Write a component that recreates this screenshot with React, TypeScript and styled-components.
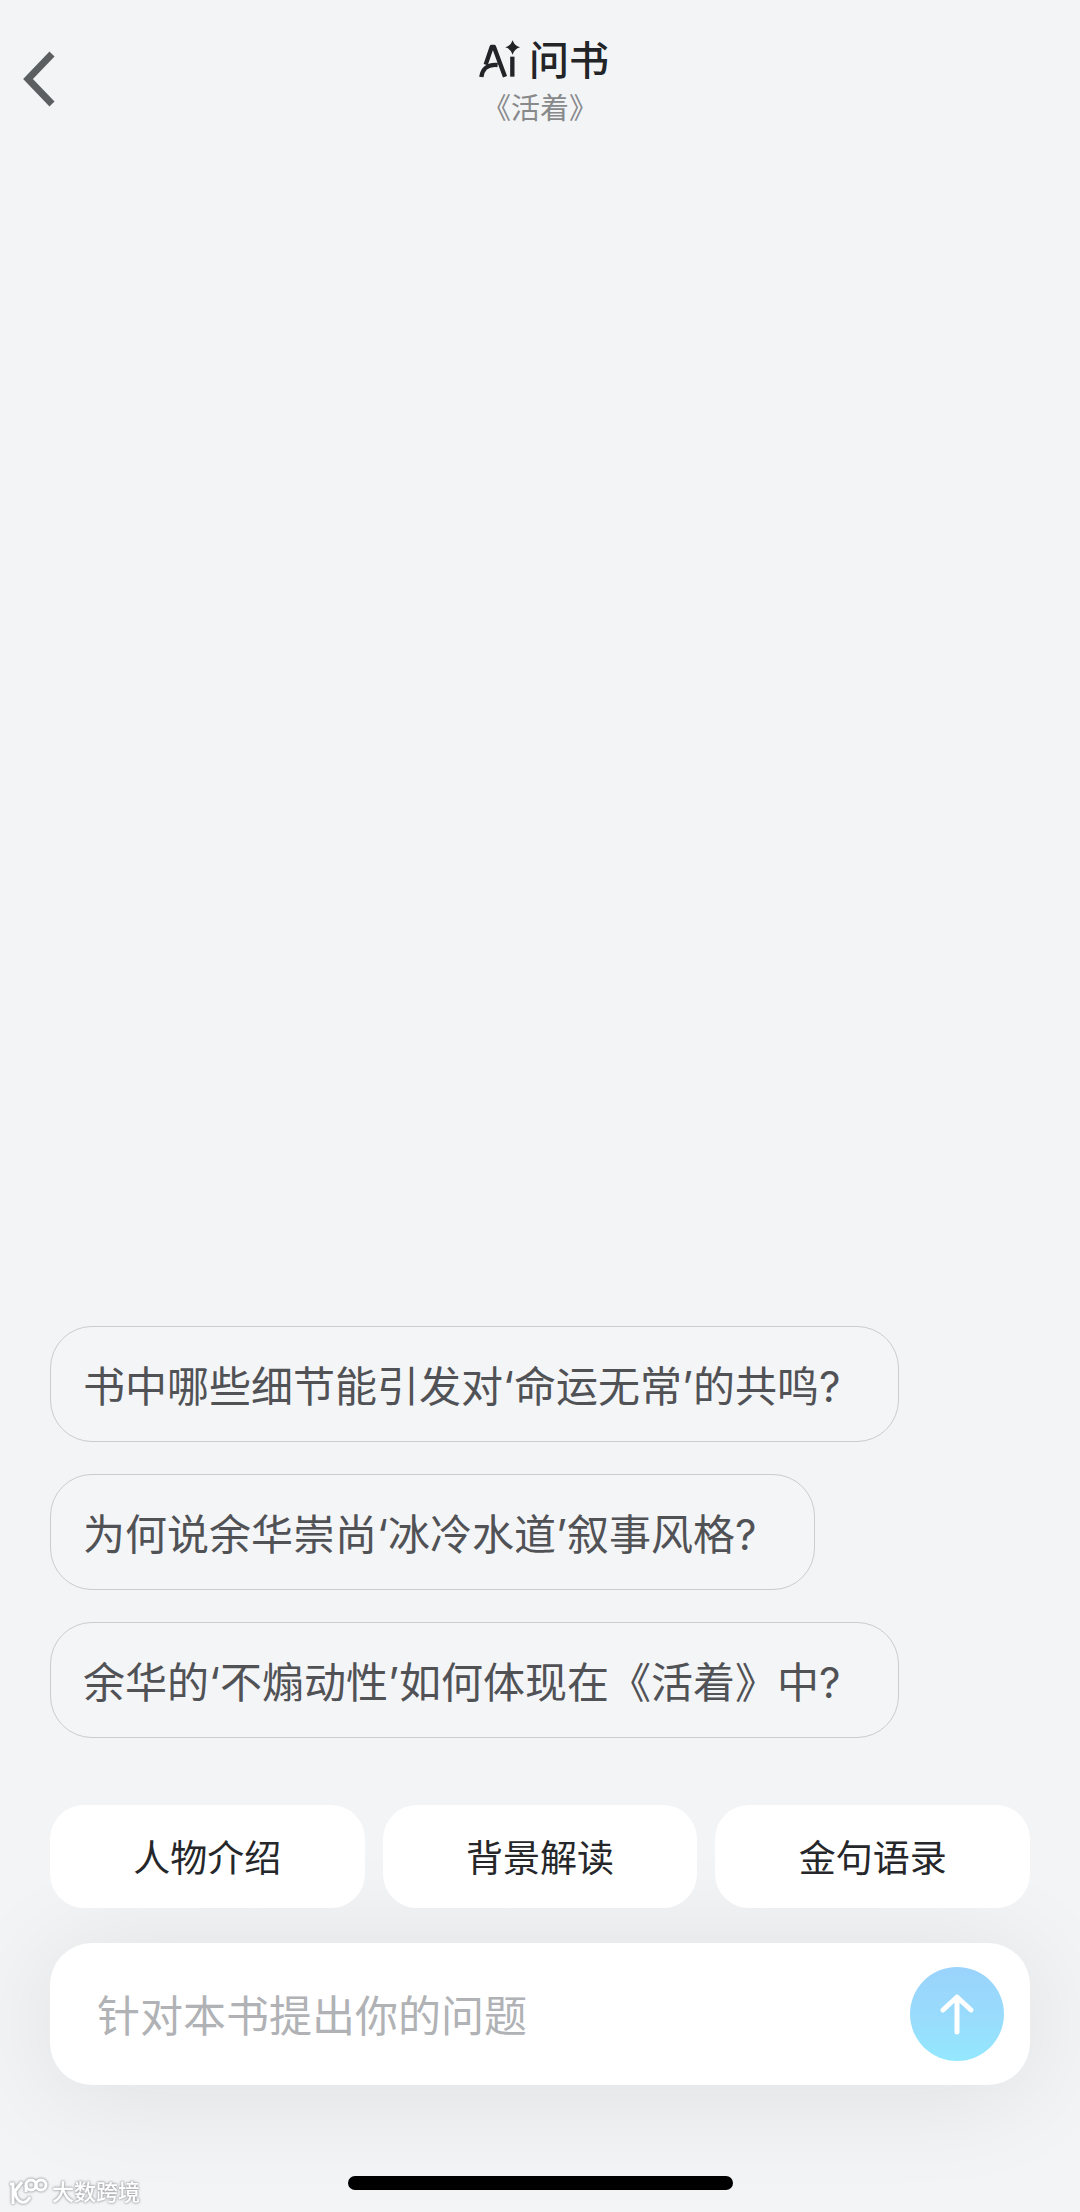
import React, { useState } from "react";
import styled, { createGlobalStyle } from "styled-components";

const GlobalStyle = createGlobalStyle`
  * { box-sizing: border-box; }
  body {
    margin: 0;
    background: #f3f4f6;
    font-family: Inter, "Noto Sans CJK SC", sans-serif;
  }
  button, input { font-family: inherit; }
`;

const Page = styled.main`
  position: relative;
  display: flex;
  flex-direction: column;
  min-height: 100vh;
  padding-bottom: 22px;
  overflow: hidden;
  background: #f3f4f6;
`;

const Header = styled.header`
  display: grid;
  grid-template-columns: 80px 1fr 80px;
  align-items: center;
  padding-top: 35px;
`;

const BackButton = styled.button`
  display: flex;
  padding: 0 20px 8px;
  border: 0;
  background: none;
  color: #5c5f62;
  cursor: pointer;
`;

const Heading = styled.div`
  display: flex;
  flex-direction: column;
  align-items: center;
`;

const Title = styled.h1`
  display: flex;
  align-items: center;
  gap: 8px;
  margin: 0;
  color: #222428;
  font-size: 40px;
  font-weight: 500;
  line-height: 52px;

  svg { margin-bottom: 4px; }
`;

const BookName = styled.p`
  margin: 0;
  color: #88898b;
  font-size: 29px;
  line-height: 44px;
`;

const Questions = styled.section`
  display: flex;
  flex-direction: column;
  align-items: flex-start;
  gap: 32px;
  margin-top: auto;
  padding: 0 50px;
`;

const Question = styled.button`
  min-height: 116px;
  padding: 6px 58px 0 32px;
  border: 1px solid #cbccce;
  border-radius: 42px;
  background: #f4f5f7;
  color: #515256;
  font-size: 42px;
  line-height: 60px;
  text-align: left;
  cursor: pointer;
`;

const Topics = styled.nav`
  position: relative;
  z-index: 1;
  display: grid;
  grid-template-columns: repeat(3, 1fr);
  gap: 18px;
  padding: 67px 50px 35px;
`;

const Topic = styled.button`
  height: 103px;
  padding: 4px 0 0;
  border: 0;
  border-radius: 34px;
  background: #fff;
  color: #26272a;
  font-size: 37px;
  line-height: 52px;
  cursor: pointer;
`;

const AskForm = styled.form`
  display: flex;
  align-items: center;
  margin: 0 50px 91px;
  padding: 24px 26px 24px 47px;
  border-radius: 42px;
  background: #fff;
  box-shadow: 0 8px 110px rgba(20, 20, 24, 0.09);
`;

const AskInput = styled.input`
  flex: 1;
  min-width: 0;
  height: 68px;
  padding: 4px 0 0;
  border: 0;
  outline: 0;
  background: none;
  color: #26272a;
  font-size: 43px;
  &::placeholder {
    color: #b0b2b5;
    opacity: 1;
  }
`;

const SendButton = styled.button`
  display: flex;
  align-items: center;
  justify-content: center;
  width: 94px;
  height: 94px;
  padding: 0;
  border: 0;
  border-radius: 50%;
  background: linear-gradient(#9ad3fc, #99dcfc 55%, #93e8ff);
  cursor: pointer;
`;

const HomeIndicator = styled.div`
  align-self: center;
  width: 385px;
  height: 14px;
  border-radius: 7px;
  background: #000;
`;

const Watermark = styled.div`
  position: absolute;
  bottom: 4px;
  left: 8px;
  display: flex;
  align-items: center;
  gap: 4px;
  color: #fff;
  font-size: 22px;
  font-weight: 500;
  line-height: 32px;
  filter: drop-shadow(0 0 1px #a0a1a4) drop-shadow(0 0 1px #b8b9bc);
`;

const questions = [
  "书中哪些细节能引发对‘命运无常’的共鸣?",
  "为何说余华崇尚‘冰冷水道’叙事风格?",
  "余华的‘不煽动性’如何体现在《活着》中?",
];

const topics = ["人物介绍", "背景解读", "金句语录"];

function AiLogo() {
  return (
    <svg width="50" height="39" viewBox="0 30 150 117" role="img" aria-label="Ai">
      <g fill="none" stroke="currentColor" strokeWidth="13">
        <path d="M44 104 L62 51 H69 L102 140" strokeLinejoin="round" />
        <path d="M31 141 C34 116 52 102 80 105" />
        <path d="M124 80 V140" />
      </g>
      <path
        d="M125 31 Q130 47 147 52 Q130 57 125 74 Q120 57 103 52 Q120 47 125 31 Z"
        fill="currentColor"
      />
    </svg>
  );
}

function BackIcon() {
  return (
    <svg width="36" height="58" viewBox="0 0 36 58" aria-hidden="true">
      <path d="M32 4 L8 29 L32 54" fill="none" stroke="currentColor" strokeWidth="7" />
    </svg>
  );
}

function ArrowUpIcon() {
  return (
    <svg width="40" height="46" viewBox="0 0 40 46" aria-hidden="true">
      <path
        d="M20 41 V6 M6 19 L20 6 L34 19"
        fill="none"
        stroke="#fff"
        strokeWidth="5"
        strokeLinecap="round"
        strokeLinejoin="round"
      />
    </svg>
  );
}

function WatermarkLogo() {
  return (
    <svg width="40" height="28" viewBox="0 0 40 28" aria-hidden="true">
      <g fill="none" stroke="currentColor" strokeWidth="3">
        <path d="M2 6 H5 V26 M14 4 L7 13 C8 25 17 28 22 19" />
        <path d="M18 14 V7" />
        <circle cx="23" cy="7" r="5" />
        <circle cx="33" cy="7" r="5" />
      </g>
    </svg>
  );
}

export default function App() {
  const [text, setText] = useState("");
  return (
    <>
      <GlobalStyle />
      <Page lang="zh-CN">
        <Header>
          <BackButton type="button" aria-label="返回">
            <BackIcon />
          </BackButton>
          <Heading>
            <Title>
              <AiLogo />
              问书
            </Title>
            <BookName>《活着》</BookName>
          </Heading>
        </Header>
        <Questions>
          {questions.map((q) => (
            <Question key={q} type="button" onClick={() => setText(q)}>
              {q}
            </Question>
          ))}
        </Questions>
        <Topics>
          {topics.map((t) => (
            <Topic key={t} type="button" onClick={() => setText(t)}>
              {t}
            </Topic>
          ))}
        </Topics>
        <AskForm onSubmit={(e) => e.preventDefault()}>
          <AskInput
            aria-label="问题"
            placeholder="针对本书提出你的问题"
            value={text}
            onChange={(e) => setText(e.target.value)}
          />
          <SendButton type="submit" aria-label="发送">
            <ArrowUpIcon />
          </SendButton>
        </AskForm>
        <HomeIndicator />
        <Watermark>
          <WatermarkLogo />
          大数跨境
        </Watermark>
      </Page>
    </>
  );
}
